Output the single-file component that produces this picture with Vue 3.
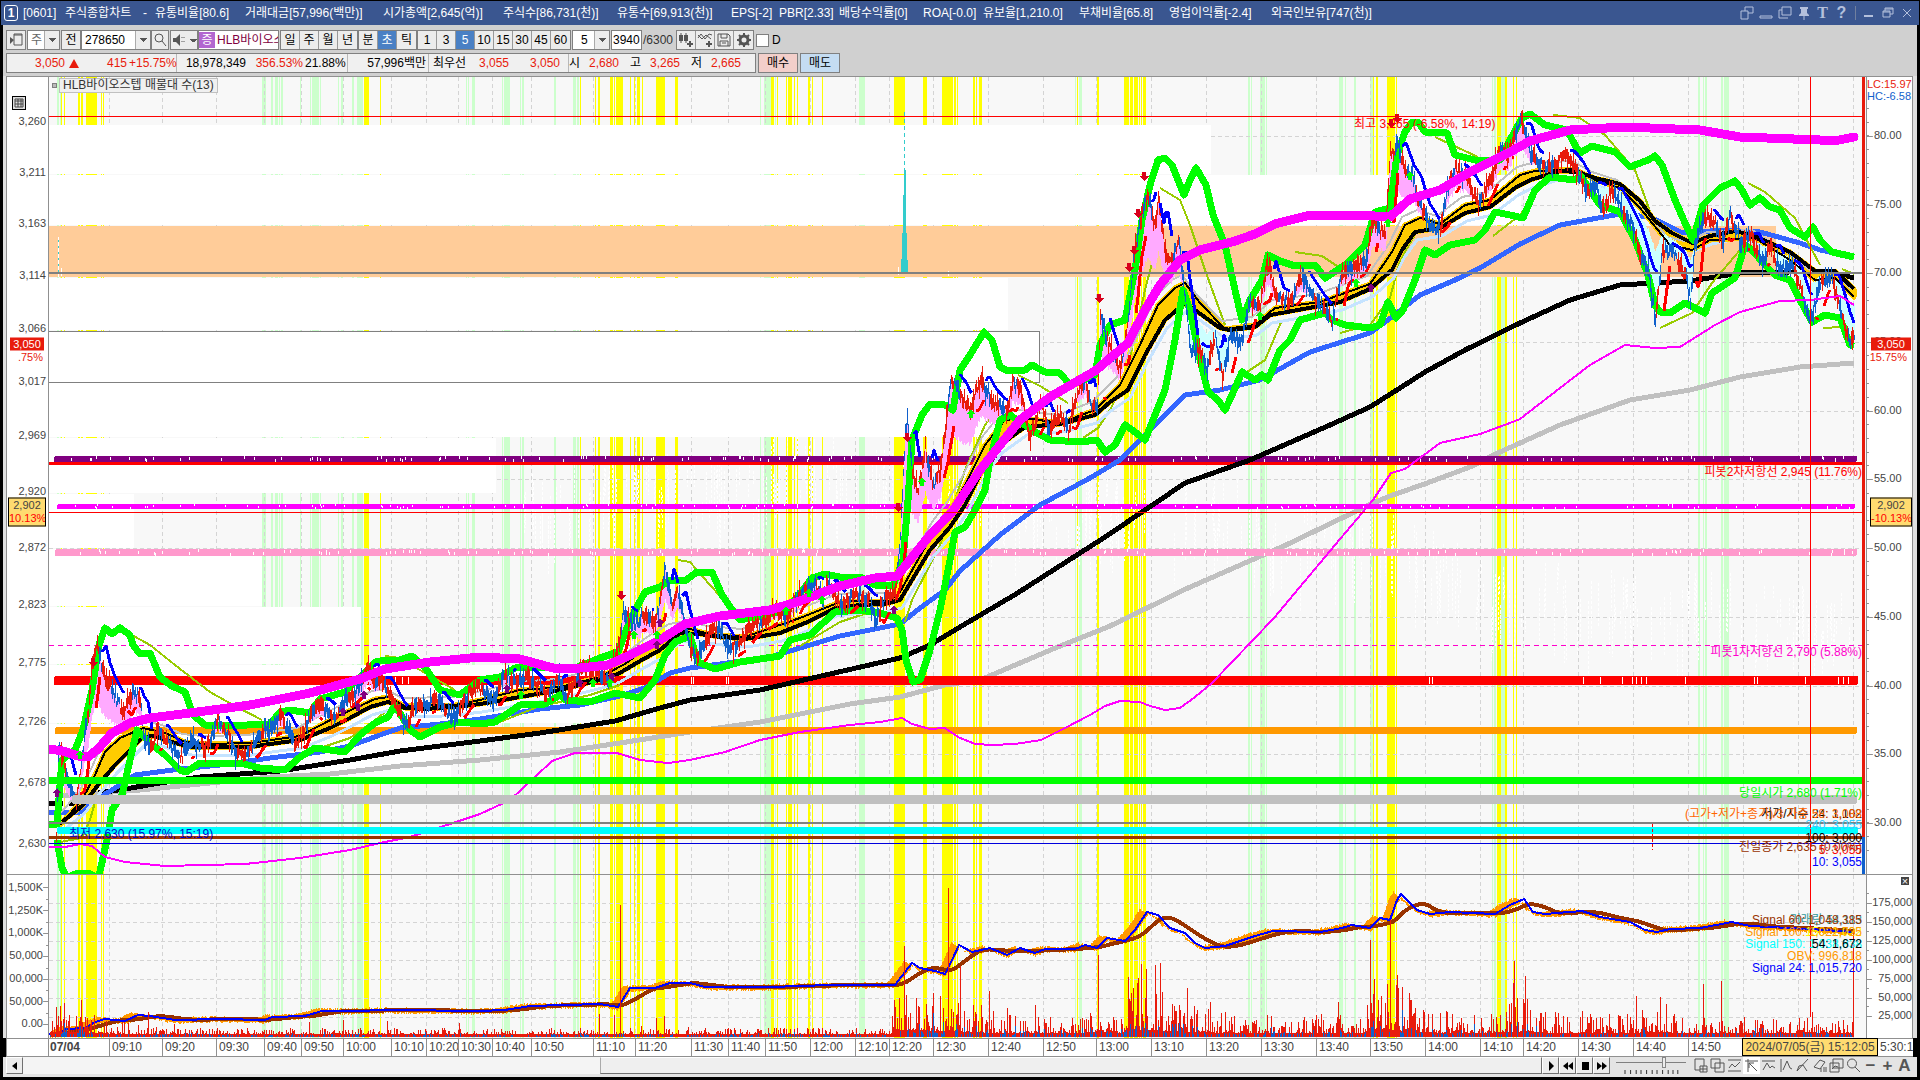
<script setup>
import { ref } from 'vue'

const VIEW = { x: 49, y: 77, w: 1817, h: 961 }
const topOf = (y) => ({ top: ((y - VIEW.y) / VIEW.h) * 100 + '%' })
const leftOf = (x) => ({ left: ((x - VIEW.x) / VIEW.w) * 100 + '%' })

/* each title entry takes six pixels per latin cell, twelve per hangul cell */
const cells = (t) => [...t].reduce((n, c) => n + (c.charCodeAt(0) > 0x2000 ? 2 : 1), 1)
const titleItems = [
  '[0601]', '주식종합차트', '-', '유통비율[80.6]', '거래대금[57,996(백만)]', '시가총액[2,645(억)]',
  '주식수[86,731(천)]', '유통수[69,913(천)]', 'EPS[-2]', 'PBR[2.33]', '배당수익률[0]', 'ROA[-0.0]',
  '유보율[1,210.0]', '부채비율[65.8]', '영업이익률[-2.4]', '외국인보유[747(천)]',
].map((text) => ({ text, width: cells(text) * 6 + 'px' }))

const code = ref('278650')
const count = ref('3940')
const periods = ['일', '주', '월', '년']
const units = ['분', '초', '틱']
const steps = ['1', '3', '5', '10', '15', '30', '45', '60']

/* seeded noise keeps the drawing stable between renders */
let seed = 7
const rnd = () => {
  seed = (seed * 1103515245 + 12345) % 2147483648
  return seed / 2147483648
}
const parse = (s) => s.trim().split(/\s+/).map((p) => p.split(',').map(Number))
const at = (pts, x) => {
  if (x <= pts[0][0]) return pts[0][1]
  for (let i = 1; i < pts.length; i++) {
    if (x <= pts[i][0]) {
      const [a, b] = [pts[i - 1], pts[i]]
      return a[1] + ((b[1] - a[1]) * (x - a[0])) / (b[0] - a[0] || 1)
    }
  }
  return pts[pts.length - 1][1]
}

const yellow = parse('61,1 64,1 78,2 81,2 86,11 101,1 103,1 364,5 380,1 580,1 595,1 598,2 610,3 614,1 616,7 630,1 634,1 637,3 642,1 656,9 675,3 771,3 777,1 786,1 788,4 794,1 797,1 808,2 812,1 822,1 894,11 923,4 942,11 954,2 957,1 973,2 976,1 979,3 1077,1 1097,2 1124,5 1130,3 1134,4 1139,1 1141,1 1143,3 1373,1 1376,2 1387,8 1396,1 1497,4 1505,2 1513,1 1516,1')
const mint = parse('57,2 60,1 262,4 271,2 275,3 279,1 281,2 300,1 310,1 312,7 320,1 338,1 341,2 352,2 357,6 466,1 468,1 472,3 502,1 504,6 520,1 522,2 554,2 573,3 577,2 760,1 764,7 775,1 859,6 1075,1 1079,3 1248,2 1251,1 1260,5 1266,1 1339,4 1345,1 1354,2 1370,3 1492,1 1494,2 1501,4 1698,2 1703,1 1705,2 1721,2 1724,5')
const times = [
  [109, '09:10'], [162, '09:20'], [216, '09:30'], [264, '09:40'], [301, '09:50'], [343, '10:00'], [391, '10:10'],
  [426, '10:20'], [458, '10:30'], [492, '10:40'], [531, '10:50'], [593, '11:10'], [635, '11:20'], [691, '11:30'],
  [728, '11:40'], [765, '11:50'], [810, '12:00'], [855, '12:10'], [889, '12:20'], [933, '12:30'], [988, '12:40'],
  [1043, '12:50'], [1096, '13:00'], [1151, '13:10'], [1206, '13:20'], [1261, '13:30'], [1316, '13:40'],
  [1370, '13:50'], [1425, '14:00'], [1480, '14:10'], [1523, '14:20'], [1578, '14:30'], [1633, '14:40'], [1688, '14:50'],
]
const gridX = [...times.map((t) => t[0]), 1743, 1798, 1853]
const gridY = [136, 205, 273, 342, 411, 479, 548, 617, 686, 754, 823, 903, 922, 941, 960, 979, 998, 1017]

/* volume-by-price rows: top, bottom, right edge */
const rows = [[125, 174, 1211], [175, 225, 1521], [278, 330, 1008], [331, 382, 1039], [383, 437, 1040], [438, 493, 496], [494, 548, 134], [549, 606, 262], [607, 664, 361], [665, 723, 603], [724, 780, 451]]

const magentaWide = '49,749 63,751 78,756 88,757 98,749 112,733 130,723 150,718 190,713 250,705 310,693 360,679 385,669 430,662 480,657 520,659 553,668 580,668 608,665 630,655 660,640 685,624 720,616 770,610 800,601 840,586 875,578 897,576 910,560 930,535 952,512 980,470 1020,420 1050,397 1095,371 1128,343 1145,310 1160,285 1180,260 1200,250 1235,241 1255,234 1275,224 1310,215 1360,215 1390,217 1410,199 1440,190 1470,172 1510,152 1530,141 1570,130 1625,127 1700,130 1740,137 1820,140 1834,141 1854,137'
const slowLine = '62,822 82,806 98,785 115,765 130,750 143,737 155,736 165,740 190,747 250,747 270,744 300,740 330,728 350,718 370,707 388,702 405,708 425,709 455,707 480,704 520,697 560,690 600,680 618,674 640,661 660,650 680,633 700,634 720,637 745,639 780,633 810,621 835,608 860,605 885,604 900,600 912,580 930,550 950,527 965,505 985,465 1000,445 1025,427 1060,424 1095,415 1110,402 1128,390 1145,355 1165,320 1185,303 1195,310 1220,328 1230,330 1255,327 1270,315 1320,306 1340,302 1370,289 1392,270 1402,250 1415,232 1440,228 1465,213 1490,207 1515,188 1530,180 1560,171 1578,172 1595,178 1620,184 1640,201 1655,221 1672,233 1692,243 1710,236 1735,231 1755,236 1790,252 1815,271 1835,271 1854,289'
const fastLine = '60,825 82,800 95,775 105,752 120,738 143,728 165,733 185,742 205,744 250,743 300,736 340,715 375,699 388,697 405,706 455,705 480,700 520,690 560,687 600,677 625,664 650,645 672,632 690,629 710,634 745,637 800,618 840,602 860,601 890,601 900,592 915,565 935,530 950,510 965,485 985,445 1005,420 1025,418 1060,423 1095,410 1120,385 1140,345 1158,305 1175,288 1185,283 1200,303 1225,329 1255,325 1275,308 1320,302 1370,284 1392,252 1405,225 1420,218 1440,224 1465,205 1490,200 1520,175 1535,171 1575,169 1595,180 1620,188 1640,208 1670,245 1692,250 1710,240 1755,238 1790,260 1815,280 1835,278 1854,297'
const blueLine = '49,812 80,812 95,800 112,790 135,775 180,769 220,765 270,758 320,752 350,746 380,735 400,728 440,724 480,719 540,709 580,705 620,696 645,688 670,673 690,668 720,664 770,657 800,648 840,636 870,630 900,624 920,608 945,590 960,571 1000,535 1040,505 1090,478 1120,460 1150,430 1185,395 1220,390 1260,380 1310,352 1370,333 1392,317 1420,295 1455,280 1480,268 1520,244 1560,225 1620,214 1650,217 1680,232 1700,232 1720,230 1760,232 1800,243 1820,250 1854,257'
const blackLine = '98,793 125,789 160,783 200,777 280,771 350,760 400,751 480,741 540,733 615,721 660,708 690,700 760,690 830,674 900,658 930,645 960,627 1016,594 1055,569 1102,539 1160,500 1185,483 1250,460 1330,425 1370,407 1400,388 1425,372 1465,350 1520,323 1570,300 1620,285 1690,281 1740,273 1790,272 1830,272 1854,278'
const grayLine = '60,796 140,790 270,777 330,774 400,766 480,760 560,752 620,743 690,732 760,722 850,704 900,697 945,685 980,680 1053,649 1108,627 1188,588 1286,545 1371,504 1390,496 1430,482 1470,467 1500,452 1560,425 1630,400 1690,390 1740,377 1800,367 1854,363'
const magentaThin = '49,847 65,847 80,844 92,846 105,857 125,862 165,866 245,864 300,858 350,850 380,843 410,837 450,824 480,814 510,800 535,777 552,761 575,753 617,753 640,760 668,763 690,760 725,752 760,740 800,732 850,725 880,722 902,718 912,724 930,729 945,728 958,737 975,744 992,745 1015,744 1041,740 1065,728 1090,715 1105,706 1120,701 1140,702 1150,706 1165,710 1180,708 1195,697 1212,683 1274,618 1335,545 1373,500 1391,473 1405,469 1440,443 1480,434 1510,423 1520,419 1560,388 1590,365 1625,345 1655,348 1680,347 1715,325 1740,312 1780,301 1810,300 1840,296 1854,305'
const greenTop = '49,824 57,824 62,760 75,750 83,730 92,690 99,645 105,628 112,634 120,628 130,635 133,645 140,654 150,653 160,677 172,686 185,692 193,715 205,725 225,726 270,724 280,712 290,710 310,713 320,699 345,692 375,662 385,660 400,660 412,656 425,667 440,690 460,695 480,680 500,677 515,668 540,667 575,668 600,658 618,652 630,620 645,592 660,587 670,580 685,581 697,572 712,572 722,595 733,611 740,620 780,612 795,600 812,578 825,574 840,577 860,577 875,585 893,586 903,560 908,500 912,440 922,415 930,404 945,405 953,410 960,370 970,355 984,332 992,340 1000,367 1008,371 1025,370 1032,365 1045,372 1060,373 1070,385 1080,382 1095,375 1100,345 1110,325 1125,320 1135,270 1142,220 1150,185 1158,160 1165,158 1172,165 1184,195 1190,180 1196,168 1206,185 1213,215 1225,245 1235,290 1242,320 1250,300 1262,280 1268,255 1280,261 1295,266 1315,265 1325,278 1345,265 1365,245 1375,212 1390,208 1397,155 1405,132 1412,122 1418,122 1425,132 1447,133 1455,155 1475,160 1500,160 1510,140 1522,118 1530,114 1545,125 1567,130 1575,145 1580,153 1592,146 1615,152 1630,167 1648,160 1655,156 1662,165 1675,200 1685,223 1693,240 1703,205 1720,188 1735,181 1742,190 1750,205 1760,198 1770,207 1780,210 1790,228 1805,237 1813,227 1820,240 1832,252 1854,257'
const greenLow = '57,840 62,868 68,880 98,880 107,840 112,810 122,795 130,760 137,730 150,743 165,755 180,770 186,772 200,763 240,763 260,768 285,770 300,757 315,748 345,752 360,735 375,723 388,717 395,705 410,730 420,737 440,727 460,722 480,724 495,722 520,705 545,704 560,695 565,700 590,702 615,693 640,698 655,680 665,655 675,642 690,636 698,662 715,669 740,662 780,656 790,640 810,635 835,612 860,610 880,613 897,618 902,630 906,660 913,682 920,680 930,650 940,610 950,560 955,532 965,527 975,510 985,490 990,460 1000,420 1010,415 1035,432 1050,440 1080,442 1097,440 1105,452 1115,445 1125,425 1135,432 1145,440 1155,415 1165,390 1175,340 1183,290 1190,310 1200,360 1208,392 1218,400 1225,410 1232,395 1242,372 1255,380 1262,375 1268,380 1280,350 1290,340 1300,320 1325,313 1332,320 1345,325 1370,328 1380,325 1388,302 1396,318 1403,310 1415,280 1425,250 1435,255 1450,245 1475,240 1485,230 1495,212 1510,215 1523,218 1535,190 1550,177 1575,180 1580,175 1600,205 1620,212 1635,240 1648,275 1655,305 1660,312 1670,313 1685,303 1705,313 1712,293 1735,278 1745,245 1752,250 1765,265 1775,275 1790,280 1800,300 1812,322 1825,315 1840,318 1850,345 1854,346'
const olive = [
  '60,842 82,838 90,820 97,795', '130,634 150,645 175,665 210,692 235,706 262,720', '320,748 350,738 375,720 388,710',
  '385,656 400,658 420,670 455,690', '500,722 540,706 560,702', '560,702 590,695 620,685', '678,560 690,562 710,585 730,607',
  '800,646 840,622 870,612', '905,622 912,600 940,545 965,470 985,425 1000,405', '1018,375 1040,386 1068,403',
  '1083,438 1098,428 1110,410 1125,380 1145,290 1158,240', '1160,188 1180,200 1190,225 1205,270 1225,325',
  '1235,380 1265,360 1282,320', '1295,252 1322,256 1340,268', '1340,333 1370,325 1390,298 1400,260 1415,235',
  '1435,137 1478,157', '1493,236 1520,215 1545,180', '1553,115 1580,118 1605,135 1635,170 1655,225',
  '1660,328 1692,313 1712,283 1740,250', '1748,183 1765,192 1795,218 1820,265', '1823,328 1842,327', '1842,269 1854,274',
]

const price = parse('49,835 56,835 58,745 63,760 70,790 76,800 80,770 88,710 92,660 97,645 101,665 106,680 115,698 123,712 127,700 133,690 140,700 143,735 150,750 158,728 166,740 180,760 190,740 205,750 212,735 218,720 228,735 235,755 250,752 262,730 275,728 280,715 290,735 297,745 305,725 318,703 328,712 336,718 345,698 358,690 368,665 375,685 382,680 392,700 407,725 415,702 425,706 435,697 452,718 468,695 477,685 492,702 505,675 515,685 525,675 535,685 545,695 558,678 565,697 580,670 595,668 608,680 617,650 623,612 635,625 645,615 655,625 660,600 665,570 672,605 677,590 684,620 690,650 696,658 705,640 718,625 728,650 738,645 750,628 765,620 775,610 787,618 795,600 805,590 812,582 822,595 828,583 842,608 855,592 868,598 875,620 885,598 895,590 900,540 905,430 907,424 912,470 918,490 925,450 933,485 940,470 945,430 950,378 957,385 963,400 970,410 980,378 985,390 995,405 1008,410 1012,380 1020,390 1030,440 1040,400 1048,430 1060,415 1068,430 1078,390 1085,380 1090,405 1097,410 1100,315 1108,345 1115,360 1120,370 1128,320 1133,260 1140,220 1147,195 1155,225 1158,200 1165,255 1172,260 1178,240 1185,300 1190,350 1200,350 1207,370 1215,335 1222,380 1230,335 1240,345 1250,300 1260,305 1267,260 1275,295 1290,302 1300,275 1315,300 1325,310 1332,325 1340,275 1352,270 1365,262 1372,220 1385,235 1390,155 1397,145 1405,170 1412,175 1420,205 1430,225 1440,230 1447,190 1455,170 1468,180 1478,205 1490,180 1500,150 1508,155 1517,128 1522,122 1530,155 1540,165 1555,165 1562,155 1575,165 1585,190 1595,185 1603,210 1612,190 1625,215 1632,225 1640,255 1648,270 1655,320 1662,250 1675,255 1685,275 1690,300 1695,240 1705,215 1715,225 1722,240 1730,215 1740,245 1750,235 1762,265 1770,245 1778,270 1792,265 1800,290 1810,322 1820,285 1830,275 1838,300 1845,330 1850,340 1854,335')
const slowPts = parse(slowLine)
let redBars = ''
let blueBars = ''
let pinkFill = ''
let cyanFill = ''
const capBlue = []
const capRed = []
let tone = 0
for (let x = 56; x <= 1854; x += 1) {
  const p = at(price, x) + (rnd() - 0.5) * 8
  if (x % 3 === 0) tone = rnd() + (at(price, x + 3) > at(price, x - 3) ? 0.08 : -0.08)
  const reach = x % 3 === 1 ? 12 : 7
  const up = 2 + rnd() * reach
  const dn = 2 + rnd() * reach
  const bar = `M${x}.5 ${Math.round(p - up)}V${Math.round(p + dn)}`
  if (tone < 0.52) redBars += bar
  else blueBars += bar
  const s = at(slowPts, x)
  if (s - p > 22) pinkFill += `M${x}.5 ${Math.round(p)}V${Math.round(p + (s - p) * 0.4)}`
  if (p - s > 16) cyanFill += `M${x}.5 ${Math.round(p)}V${Math.round(s + (p - s) * 0.3)}`
  if (x % 2 === 0) {
    const before = at(price, x - 9)
    const now = at(price, x)
    if (now - before > 3) capBlue.push([x, Math.round(before + (now - before) * 0.25 - 8)])
    if (before - now > 3) capRed.push([x, Math.round(before - (before - now) * 0.25 + 8)])
  }
}
const runs = (pts) => pts.map((p, i) => {
  const q = pts[i - 1]
  return (q && p[0] - q[0] <= 2 && Math.abs(p[1] - q[1]) < 26 ? 'L' : 'M') + p[0] + ' ' + p[1]
}).join('')
const capBluePath = runs(capBlue)
const capRedPath = runs(capRed.filter((p) => p[0] % 16 < 12))
const ribbon = 'M' + fastLine + 'L' + slowPts.slice().reverse().map((p) => p.join(',')).join(' ') + 'Z'

/* faint white ticks and the notches they cut into the level bars */
let flecks = ''
let notches = ''
for (let i = 0; i < 420; i++) {
  const x = Math.round(500 + rnd() * 1350)
  const y = Math.round(at(slowPts, 2400 - x) * 0.3 + 380 + rnd() * 60)
  flecks += `M${x}.5 ${y}v${Math.round(12 + rnd() * 50)}`
}
for (let i = 0; i < 150; i++) {
  const x = Math.round(60 + rnd() * 1785)
  const cx = x + Math.round(rnd() * 6)
  notches += `M${x}.5 ${456 + Math.round(rnd() * 3)}v3M${cx}.5 ${504 + Math.round(rnd() * 3)}v2M${x + 9}.5 ${549 + Math.round(rnd() * 4)}v3`
}
for (const x of [691, 693, 726, 728, 395, 402, 408, 1429, 1432, 1583, 1600, 1622, 1632, 1636, 1641, 1646, 1685, 1754, 1757, 1805, 1838, 1843, 1848]) notches += `M${x}.5 677v7`

const levels = [
  { y: 456, h: 6, x: 54, e: 1857, c: '#800080' }, { y: 462, h: 3, x: 49, e: 1862, c: '#ff0000' },
  { y: 504, h: 5, x: 57, e: 1855, c: '#ff00ff' }, { y: 549, h: 7, x: 55, e: 1857, c: '#ff99cc' },
  { y: 676, h: 9, x: 54, e: 1858, c: '#ff0000' }, { y: 727, h: 7, x: 55, e: 1857, c: '#ff9900' },
]
const baseLevels = [
  { y: 777, h: 7, x: 49, e: 1862, c: '#00ff00' }, { y: 795, h: 9, x: 72, e: 1857, c: '#c0c0c0' },
  { y: 822, h: 2, x: 49, e: 1862, c: '#808080' }, { y: 827, h: 7, x: 57, e: 1858, c: '#00ffff' },
  { y: 836, h: 3, x: 49, e: 1862, c: '#993300' }, { y: 843, h: 1, x: 49, e: 1862, c: '#0000dd' },
]

const down = parse('93,662 621,595 898,507 907,437 1099,298 1129,267 1134,250 1138,213 1144,176 1391,123 1397,118')
const upPurple = parse('57,793 343,712 358,707 364,695 507,689 580,683 612,677 660,623 657,645 894,610 1371,288')
const upGreen = parse('80,755 521,695 593,683 610,683 634,635 657,635 786,611 809,593 822,600 922,482 971,414 1260,316 1356,283 1388,223 1410,176')

/* lower panel */
const obv = parse('49,1034 58,1034 65,1029 85,1028 95,1022 105,1019 125,1021 138,1015 150,1016 175,1020 220,1019 265,1020 272,1017 305,1016 322,1011 350,1011 390,1010 480,1011 505,1010 530,1006 600,1004 618,1007 630,988 655,988 670,983 690,983 705,987 770,987 830,985 895,985 905,972 912,963 920,968 935,971 945,974 952,960 959,945 972,952 990,948 1007,955 1020,948 1035,953 1045,949 1075,949 1085,945 1097,948 1107,938 1125,941 1135,930 1147,912 1158,915 1170,928 1185,933 1195,943 1205,948 1225,946 1240,941 1255,936 1273,931 1320,932 1342,928 1352,925 1370,928 1380,918 1390,920 1397,900 1401,894 1412,905 1417,910 1430,914 1450,912 1495,914 1510,905 1524,899 1533,912 1545,914 1582,911 1600,917 1630,922 1645,930 1657,932 1670,929 1700,928 1732,922 1750,926 1810,929 1854,932')
let orangeBars = ''
const brown = []
for (let x = 50; x <= 1854; x++) {
  const now = at(obv, x)
  const lead = at(obv, x + 8)
  const lift = now - lead
  orangeBars += `M${x}.5 ${Math.round(now + 2 + rnd() * 2)}V${Math.round(now - 1 - lift - rnd() * 2)}`
  if (x % 6 === 0) {
    let sum = 0
    for (let k = 0; k < 30; k++) sum += at(obv, x - k)
    brown.push(x + ',' + (sum / 30).toFixed(1))
  }
}
const brownLine = brown.join(' ')
const obvLine = obv.map((p) => p.join(',')).join(' ')
const energy = parse('49,5 57,20 110,9 160,4 600,4 640,5 890,4 896,35 960,22 1000,13 1080,10 1097,22 1120,12 1128,38 1160,30 1200,18 1260,12 1360,12 1372,38 1410,26 1440,14 1500,13 1525,26 1550,13 1625,12 1660,20 1690,10 1840,11 1854,16')
let volRed = ''
let volBlue = ''
for (let x = 50; x <= 1853; x++) {
  const e = at(energy, x)
  const h = 1 + Math.pow(rnd(), 3) * e * 1.6 + e * 0.15
  volRed += `M${x}.5 1037v${-Math.round(h + 1)}`
  if (rnd() < 0.35) volBlue += `M${x}.5 1037v${-Math.round(1 + h * 0.5 * rnd() + e * 0.08)}`
}
const spikes = parse('56,1007 81,1000 94,1015 148,1012 174,1024 309,1022 343,1020 387,1021 459,1023 599,1014 614,1015 620,905 656,1018 664,1016 895,1007 899,998 904,946 906,995 918,1006 926,1012 948,888 960,966 989,991 1007,1008 1035,1005 1098,955 1128,995 1138,978 1141,964 1146,969 1155,965 1160,963 1187,988 1210,1002 1221,1013 1316,1016 1338,1002 1370,940 1374,979 1387,984 1390,920 1397,975 1410,1000 1424,1014 1509,1004 1513,983 1514,961 1524,1003 1525,976 1555,1012 1582,1011 1636,996 1660,997 1703,984 1721,981 1812,1012 1853,930')
const spikePath = spikes.map(([x, y]) => `M${x}.5 1037V${y}`).join('')

const leftLabels = [
  [121, '3,260'], [172, '3,211'], [223, '3,163'], [275, '3,114'], [328, '3,066'], [381, '3,017'], [435, '2,969'],
  [491, '2,920'], [547, '2,872'], [604, '2,823'], [662, '2,775'], [721, '2,726'], [782, '2,678'], [843, '2,630'],
  [887, '1,500K'], [910, '1,250K'], [932, '1,000K'], [955, '50,000'], [978, '00,000'], [1001, '50,000'], [1023, '0.00'],
]
const rightLabels = [
  [135, '80.00'], [204, '75.00'], [272, '70.00'], [341, '65.00'], [410, '60.00'], [478, '55.00'], [547, '50.00'],
  [616, '45.00'], [685, '40.00'], [753, '35.00'], [822, '30.00'],
]
const volLabels = [[902, '175,000'], [921, '150,000'], [940, '125,000'], [959, '100,000'], [978, '75,000'], [997, '50,000'], [1015, '25,000']]
const minor = []
for (let i = 0; i < 55; i++) minor.push(Math.round(108 + i * 13.74))
const notes = [
  { y: 472, t: '피봇2차저항선 2,945 (11.76%)', c: '#ff0000' },
  { y: 652, t: '피봇1차저항선 2,790 (5.88%)', c: '#ff00cc' },
  { y: 793, t: '당일시가 2,680 (1.71%)', c: '#00ff00' },
  { y: 814, t: '저가/지수 24: 1,102', c: '#000000' },
  { y: 814, t: '(고가+저가+종가)/3 가중 58: 3,088', c: '#ff6600' },
  { y: 825, t: '240: 3,055', c: '#33ccff' },
  { y: 838, t: '100: 3,000', c: '#000000' },
  { y: 850, t: '5: 3,055', c: '#ff0000' },
  { y: 847, t: '전일종가 2,635 (0.00%)', c: '#993300' },
  { y: 862, t: '10: 3,055', c: '#0000ff' },
  { y: 920, t: '거래량 54,113', c: '#339999' },
  { y: 920, t: 'Signal 60: 1,048,385', c: '#993300' },
  { y: 932, t: '150: 1,022', c: '#ffff00' },
  { y: 932, t: 'Signal 100: 1,022,735', c: '#ff9900' },
  { y: 944, t: 'Signal 150: 1,038,838', c: '#00ffff' },
  { y: 944, t: '54: 1,672', c: '#000000' },
  { y: 956, t: 'OBV: 996,818', c: '#ff9900' },
  { y: 968, t: 'Signal 24: 1,015,720', c: '#0000ff' },
]
const tools = [
  'M2 1h9v7M2 1v11h5M7 8h7v6H7zM10 8v6M7 11h7', 'M1 1h9v9H1zM5 5h9v9H5z', 'M1 2h13M1 13h13M2 10l3-4 3 3 5-5', 'M1 3h13M4 1v13M5 5l8 8M5 5h5M5 5v5',
  'M1 3h13M2 12l4-7 3 5 2-2 3 2', 'M3 1v13M5 12l4-9 3 7 2 1', 'M2 13L13 1M2 13l2-5 4-1 4 6', 'M2 9l6-7 5 2-5 7zM9 10v4M12 9v5M14 9v5',
  'M4 1h10v9H4zM1 5h9v9H1zM3 11l3-3 3 1', 'M6 1a4 4 0 1 0 0 9a4 4 0 1 0 0-9M9 9l5 5',
]
</script>

<template>
  <div class="window">
    <header class="title">
      <span class="badge">1</span>
      <h1><span v-for="t in titleItems" :key="t.text" :style="{ width: t.width }">{{ t.text }}</span></h1>
      <div class="win-icons">
        <button aria-label="분리"><svg viewBox="0 0 14 14"><path d="M5 1h8v6M5 1v4M1 5h7v8H1zM8 7h5" /></svg></button>
        <button aria-label="접기"><svg viewBox="0 0 14 14"><path d="M1 10h12v2H1z" /></svg></button>
        <button aria-label="복사"><svg viewBox="0 0 14 14"><path d="M4 1h9v8H4zM1 4v8h9M1 4h3" /></svg></button>
        <button aria-label="고정"><svg viewBox="0 0 14 14"><path class="solid" d="M3 1h8v2h-1v4l2 2v1H2V9l2-2V3H3z" /><path d="M7 10v4" /></svg></button>
        <button class="glyph">T</button>
        <button class="glyph q">?</button>
        <i></i>
        <button aria-label="최소화"><svg viewBox="0 0 14 14"><path class="solid" d="M2 9h9v2H2z" /></svg></button>
        <button aria-label="이전 크기"><svg viewBox="0 0 14 14"><path d="M4 2h8v6H9M4 3h8M4 2v3M2 5h7v6H2zM2 6h7" /></svg></button>
        <button aria-label="닫기"><svg viewBox="0 0 14 14"><path d="M3 3l8 8M11 3l-8 8" /></svg></button>
      </div>
    </header>

    <div class="bars">
      <div class="bar">
        <button class="sq" aria-label="메뉴"><svg viewBox="0 0 16 16"><path d="M6 2h8v11H6zM6 3h8" /><path class="fill" d="M2 5l4 3-4 4z" /></svg></button>
        <label class="pick narrow"><select aria-label="종류"><option>주</option></select></label>
        <button class="sq">전</button>
        <label class="pick codebox"><input v-model="code" aria-label="종목코드"></label>
        <button class="sq find" aria-label="찾기"><svg viewBox="0 0 16 16"><circle cx="7" cy="6" r="4" /><path d="M10 9l4 5" /></svg></button>
        <button class="sq sound" aria-label="소리"><svg viewBox="0 0 16 16"><path class="fill" d="M2 6h3l4-4v12l-4-4H2z" /><path d="M11 5v1M11 9v1M13 5v1M13 9v1" /></svg></button>
        <div class="stock"><em>증</em><span>HLB바이오스텝</span></div>
        <div class="group"><button v-for="p in periods" :key="p">{{ p }}</button></div>
        <div class="group"><button v-for="u in units" :key="u" :class="{ on: u === '초' }">{{ u }}</button></div>
        <div class="group"><button v-for="s in steps" :key="s" :class="{ on: s === '5' }">{{ s }}</button></div>
        <label class="pick five"><select aria-label="간격"><option>5</option></select></label>
        <input v-model="count" class="count" aria-label="개수"><span class="total">/6300</span>
        <div class="group icons">
          <button aria-label="차트 추가"><svg viewBox="0 0 16 16"><path d="M3 1v10M8 1v10" /><path class="fill" d="M1 3h4v6H1zM6 3h4v6H6z" /><path class="thick" d="M12 9v6M9 12h6" /></svg></button>
          <button aria-label="지표 추가"><svg viewBox="0 0 16 16"><path d="M1 6l3-4 4 5 4-5 3 1M1 3l4 4 4-4 5 4" /><path class="thick" d="M12 9v6M9 12h6" /></svg></button>
          <button aria-label="저장"><svg viewBox="0 0 16 16"><path d="M2 2h10l2 2v10H2zM5 2v4h6V2M4 14V9h8v5M6 11h4" /></svg></button>
          <button aria-label="설정"><svg viewBox="0 0 16 16"><circle cx="8" cy="8" r="4" class="gear" /><path class="thick" d="M8 1v3M8 12v3M1 8h3M12 8h3M3 3l2 2M11 11l2 2M13 3l-2 2M3 13l2-2" /></svg></button>
        </div>
        <label class="check"><input type="checkbox">D</label>
      </div>
      <div class="bar">
        <div class="quote">
          <span class="r w60">3,050</span><i class="tri"></i><span class="r w49">415</span><span class="r w48 sep">+15.75%</span>
          <span class="w71">18,978,349</span><span class="r w57">356.53%</span><span class="w43 sep">21.88%</span>
          <span class="w81 sep">57,996백만</span><span class="w39">최우선</span><span class="r w43">3,055</span><span class="r w58 pad sep">3,050</span>
          <span class="w13">시</span><span class="r w39">2,680</span><span class="w22">고</span><span class="r w39">3,265</span><span class="w22">저</span><span class="r w39">2,665</span>
        </div>
        <button class="trade buy">매수</button>
        <button class="trade sell">매도</button>
      </div>
    </div>

    <main class="chart">
      <div class="axis left">
        <svg class="ticks" viewBox="0 77 42 961" preserveAspectRatio="none"><path d="M0 874.5H42M37 887.5h5M37 910.5h5M37 933.5h5M37 956.5h5M37 979.5h5M37 1001.5h5M37 1024.5h5M40 899.5h2M40 922.5h2M40 945.5h2M40 968.5h2M40 990.5h2M40 1013.5h2" /></svg>
        <button class="gridbtn" :style="topOf(103)" aria-label="표"><svg viewBox="0 0 12 12"><path d="M2 2h8v8H2zM2 4h8M2 7h8M5 2v8M8 2v8" /></svg></button>
        <span v-for="l in leftLabels" :key="l[0]" :style="topOf(l[0])" :class="{ low: l[0] > 874 }">{{ l[1] }}</span>
        <strong class="now" :style="topOf(344)">3,050</strong>
        <span class="rate" :style="topOf(357)">.75%</span>
        <div class="cursor" :style="topOf(512)">2,902<em>10.13%</em></div>
      </div>

      <div class="plot">
        <svg class="canvas" viewBox="49 77 1817 961" preserveAspectRatio="none">
          <defs><clipPath id="price"><rect x="49" y="77" width="1813" height="797" /></clipPath></defs>
          <rect x="49" y="77" width="1817" height="961" fill="#f8f8f8" />
          <rect v-for="b in mint" :key="'m' + b[0]" :x="b[0]" y="77" :width="b[1]" height="961" fill="#ccffcc" />
          <rect v-for="b in yellow" :key="'y' + b[0]" :x="b[0]" y="77" :width="b[1]" height="961" fill="#ffff00" />
          <g stroke="#d4d4d4" stroke-dasharray="4 3">
            <path v-for="x in gridX" :key="x" :d="`M${x + 0.5} 77V1038`" />
            <path v-for="y in gridY" :key="y" :d="`M49 ${y + 0.5}H1862`" />
          </g>
          <rect v-for="r in rows" :key="r[0]" x="49" :y="r[0]" :width="r[2] - 49" :height="r[1] - r[0]" fill="#fff" />
          <rect x="49" y="226" width="1727" height="51" fill="#ffcc99" />
          <path d="M49 331.5H1039.500V382.500H49" fill="none" stroke="#808080" />
          <path :d="flecks" class="fleck" />
          <g clip-path="url(#price)" fill="none" stroke-linejoin="round">
            <polyline :points="grayLine" stroke="#c0c0c0" stroke-width="5" />
            <rect v-for="l in levels" :key="l.y" :x="l.x" :y="l.y" :width="l.e - l.x" :height="l.h" :fill="l.c" :rx="l.x > 49 ? 2 : 0" />
            <path :d="notches" stroke="#fff" />
            <path d="M49 645.5H1862" stroke="#ff00cc" stroke-dasharray="5 4" />
            <path d="M49 803h14m6 0h8" stroke="#000" stroke-width="5" />
            <polyline :points="blackLine" stroke="#000" stroke-width="5" />
            <polyline :points="blueLine" stroke="#3366ff" stroke-width="5" />
            <polyline v-for="(o, i) in olive" :key="i" :points="o" stroke="#99cc00" stroke-width="2" />
            <polyline :points="slowLine" stroke="#c5e3ff" stroke-width="3" transform="translate(2 8)" />
            <path :d="ribbon" fill="#ffcc00" stroke="#ffcc00" stroke-width="5" />
            <polyline :points="fastLine" stroke="#c0c0c0" stroke-width="2" transform="translate(-3 -8)" />
            <path :d="pinkFill" stroke="#ffaaff" />
            <path :d="cyanFill" stroke="#ccffff" />
            <polyline :points="fastLine" stroke="#000" stroke-width="2" />
            <polyline :points="slowLine" stroke="#000" stroke-width="4" />
            <polyline :points="greenLow" stroke="#00ff00" stroke-width="7" />
            <polyline :points="greenTop" stroke="#00ff00" stroke-width="7" />
            <path d="M66 874l10-4h14l8 4" fill="#00ff00" stroke="none" />
            <path :d="capRedPath" stroke="#ff0000" stroke-width="3" />
            <path :d="redBars" stroke="#e81b0c" />
            <path :d="blueBars" stroke="#1060cc" />
            <path :d="capBluePath" stroke="#0000ff" stroke-width="3" />
            <polyline :points="magentaWide" stroke="#ff00ff" stroke-width="9" stroke-linecap="round" />
            <polyline :points="magentaThin" stroke="#ff00ff" stroke-width="2" />
            <rect v-for="l in baseLevels" :key="l.y" :x="l.x" :y="l.y" :width="l.e - l.x" :height="l.h" :fill="l.c" :rx="l.h > 6 && l.x > 49 ? 3 : 0" />
            <path d="M904.500 112V170" stroke="#33cccc" stroke-dasharray="4 3" />
            <path d="M904 170h2v50l2 53h-7l2-53z" fill="#33cccc" />
            <path d="M58.500 237v40M61.500 268v8M898.500 267v8M948.500 271v5" stroke="#fff" />
            <path d="M58.500 240v32" stroke="#33cccc" stroke-dasharray="2 4" />
            <path d="M49 273H1862" stroke="#808080" stroke-width="2" />
            <path v-for="a in down" :key="'d' + a" :d="`M${a[0] - 2} ${a[1] - 4}h4v4h3l-5 5-5-5h3z`" fill="#d8001c" />
            <path v-for="a in upPurple" :key="'p' + a" :d="`M${a[0] - 2} ${a[1] + 4}h4v-4h2l-4-5-4 5h2z`" fill="#800080" />
            <path v-for="a in upGreen" :key="'g' + a" :d="`M${a[0] - 2} ${a[1] + 4}h4v-4h2l-4-5-4 5h2z`" fill="#00ff00" />
            <path d="M1652.500 824v26" stroke="#ff0000" stroke-dasharray="3 2" />
            <path d="M49 116.500H1862M49 512.500H1862" stroke="#ff0000" />
          </g>
          <g fill="none">
            <path :d="orangeBars" stroke="#ff9900" />
            <polyline :points="brownLine" stroke="#993300" stroke-width="4" />
            <polyline :points="obvLine" stroke="#0000ff" stroke-width="2" />
            <path :d="volRed" stroke="#e81b0c" />
            <path :d="volBlue" stroke="#1060cc" />
            <path :d="spikePath" stroke="#e81b0c" />
            <path d="M1810.500 77V1017" stroke="#ff0000" />
            <path d="M49 874.500H1866" stroke="#909090" />
          </g>
          <rect x="1862" y="77" width="3" height="760" fill="#e81b0c" />
          <rect x="1862" y="837" width="3" height="37" fill="#1060cc" />
        </svg>
        <div class="caption"><i></i><span>HLB바이오스텝 매물대 수(13)</span></div>
        <span class="note" :style="{ ...topOf(124), ...leftOf(1354), color: '#ff0000' }">최고 3,265 (-6.58%, 14:19)</span>
        <span class="note" :style="{ ...topOf(834), ...leftOf(69), color: '#0000cc' }">최저 2,630 (15.97%, 15:19)</span>
        <span v-for="n in notes" :key="n.t" class="note end" :style="{ ...topOf(n.y), color: n.c }">{{ n.t }}</span>
      </div>

      <div class="axis right">
        <svg class="ticks" viewBox="0 77 46 961" preserveAspectRatio="none">
          <path v-for="m in minor" :key="m" :d="`M0 ${m + 0.5}h2`" />
          <path v-for="l in rightLabels" :key="l[0]" :d="`M0 ${l[0] + 1.5}h6`" />
          <path v-for="l in volLabels" :key="l[0]" :d="`M0 ${l[0] + 1.5}h5M0 ${l[0] - 8.5}h2`" />
          <path d="M0 874.500H46" />
        </svg>
        <span class="from lc" :style="topOf(84)">LC:15.97</span>
        <span class="from hc" :style="topOf(96)">HC:-6.58</span>
        <span v-for="l in rightLabels" :key="l[0]" class="mid" :style="topOf(l[0])">{{ l[1] }}</span>
        <strong class="now" :style="topOf(344)">3,050</strong>
        <span class="rate" :style="topOf(357)">15.75%</span>
        <div class="cursor" :style="topOf(512)">2,902<em>-10.13%</em></div>
        <button class="shut" :style="topOf(881)" aria-label="지표 닫기">×</button>
        <span v-for="l in volLabels" :key="l[0]" class="vol" :style="topOf(l[0])">{{ l[1] }}</span>
      </div>
    </main>

    <div class="timeline">
      <div class="scale">
        <b>07/04</b>
        <span v-for="t in times" :key="t[1]" :style="leftOf(t[0])">{{ t[1] }}</span>
        <mark>2024/07/05(금) 15:12:05</mark>
      </div>
      <span class="last">5:30:1</span>
    </div>

    <footer class="foot">
      <button class="key" aria-label="왼쪽"><svg viewBox="0 0 14 14"><path d="M9 3v8L4 7z" /></svg></button>
      <div class="track"><div class="thumb"></div></div>
      <button class="key" aria-label="재생"><svg viewBox="0 0 14 14"><path d="M5 2v10l5-5z" /></svg></button>
      <button class="key" aria-label="뒤로"><svg viewBox="0 0 14 14"><path d="M7 3v8L2 7zM12 3v8L7 7z" /></svg></button>
      <button class="key" aria-label="정지"><svg viewBox="0 0 14 14"><path d="M4 3h7v8H4z" /></svg></button>
      <button class="key" aria-label="앞으로"><svg viewBox="0 0 14 14"><path d="M2 3v8l5-4zM7 3v8l5-4z" /></svg></button>
      <div class="speed"><input type="range" min="0" max="10" value="7" aria-label="속도"><svg viewBox="0 0 70 5"><path d="M2.500 0v5M9.500 0v5M16.500 0v5M22.500 0v5M29.500 0v5M36.500 0v5M42.500 0v5M49.500 0v5M56.500 0v5M62.500 0v5M68.500 0v5" /></svg></div>
      <div class="tools">
        <button v-for="(d, i) in tools" :key="i" :class="{ lit: i === 3 }" :aria-label="'도구 ' + (i + 1)"><svg viewBox="0 0 15 15"><path :d="d" /></svg></button>
        <button>−</button><button>+</button><button>A</button>
      </div>
    </footer>
  </div>
</template>

<style>
body { margin: 0; background: #000; }
</style>

<style scoped>
* { box-sizing: border-box; }
.window {
  display: flex; flex-direction: column; min-height: 100vh; padding: 1px 0 3px; background: #000; color: #000;
  font: 12px/14px "Liberation Sans", "Noto Sans CJK KR", sans-serif; overflow: hidden;
}
button, input, select { font: inherit; color: inherit; margin: 0; padding: 0; border: 0; border-radius: 0; background: none; }
button { display: flex; align-items: center; justify-content: center; }
svg { display: block; fill: none; stroke: currentColor; }

.title { display: flex; align-items: center; height: 24px; margin: 0 1px; padding: 0 3px; background: #3a5690; color: #fff; }
.badge { width: 14px; height: 16px; margin-right: 5px; border: 1px solid #fff; border-radius: 3px; font-weight: bold; text-align: center; }
h1 { display: flex; flex: 1; margin: 0; font: inherit; white-space: nowrap; }
h1 span { flex: none; }
.win-icons { display: flex; align-items: center; color: #b4c0dc; }
.win-icons button { width: 19px; height: 18px; }
.win-icons svg { width: 14px; height: 14px; }
.win-icons .solid { fill: currentColor; stroke: none; }
.win-icons i { width: 1px; height: 14px; margin: 0 3px 0 4px; background: #71809f; }
.win-icons .glyph { font: bold 16px/16px "Liberation Serif", serif; }
.win-icons .q { font-family: "Liberation Sans", sans-serif; }

.bars { display: flex; flex-direction: column; gap: 3px; height: 51px; margin: 0 3px; padding: 5px 3px 3px; background: #d0d0d0; white-space: nowrap; }
.bar { display: flex; height: 20px; }
.bar > * { flex: none; }
.sq, .pick, .group, .stock, .count, .quote, .trade { height: 20px; border: 1px solid #808080; background: #ececec; }
.sq { width: 20px; }
.sq svg, .icons svg { width: 16px; height: 16px; color: #555; }
.fill { fill: currentColor; stroke: none; }
.thick { stroke-width: 2; }
.gear { stroke-width: 3; }
.pick { position: relative; display: flex; background: #fff; }
.pick select { width: 100%; padding-left: 3px; appearance: none; }
.pick::after {
  content: ""; position: absolute; top: 0; right: 0; bottom: 0; width: 14px; border-left: 1px solid #aaa;
  background: linear-gradient(#555, #555) center 7px / 7px 1px no-repeat, linear-gradient(#555, #555) center 8px / 5px 1px no-repeat, linear-gradient(#555, #555) center 9px / 3px 1px no-repeat, linear-gradient(#555, #555) center 10px / 1px 1px no-repeat, #ececec;
}
.narrow { width: 33px; margin: 0 1px; color: #666; }
.codebox { width: 70px; }
.codebox input { width: 52px; padding-left: 3px; }
.find { width: 18px; }
.sound { width: 28px; margin-left: 1px; background: linear-gradient(#555, #555) 19px 8px / 7px 1px no-repeat, linear-gradient(#555, #555) 20px 9px / 5px 1px no-repeat, linear-gradient(#555, #555) 21px 10px / 3px 1px no-repeat, #ececec; justify-content: flex-start; }
.stock { display: flex; align-items: center; width: 81px; margin: 0 1px 0 0; background: #fff; color: #800040; overflow: hidden; }
.stock em { width: 16px; flex: none; margin-right: 2px; background: #b266d0; color: #fff; font-style: normal; line-height: 16px; text-align: center; }
.group { display: flex; }
.group button { width: 19px; border-right: 1px solid #999; }
.group button:last-child { border-right: 0; }
.group .on { background: #4a80c4; color: #fff; }
.five { width: 38px; margin-left: 1px; }
.five select { padding-left: 8px; }
.count { width: 31px; margin-left: 1px; padding-left: 1px; background: #fff; }
.total { width: 34px; padding: 3px 0 0 1px; color: #333; }
.icons { margin-right: 2px; }
.check { display: flex; align-items: center; gap: 3px; }
.check input { appearance: none; width: 13px; height: 13px; border: 1px solid #808080; background: #fff; }

.quote { display: flex; align-items: center; width: 750px; margin-right: 2px; background: #f0f0f0; }
.quote span { flex: none; height: 18px; line-height: 18px; padding-right: 2px; text-align: right; }
.quote .r { color: #e81b0c; }
.quote .sep { border-right: 1px solid #b8b8b8; }
.quote .pad { padding-right: 8px; }
.tri { width: 0; margin: 0 1px 0 2px; border: 5px solid transparent; border-top: 0; border-bottom: 9px solid #e81b0c; }
.w60 { width: 60px; } .w49 { width: 49px; } .w48 { width: 48px; } .w71 { width: 71px; } .w57 { width: 57px; } .w43 { width: 43px; }
.w81 { width: 81px; } .w39 { width: 39px; } .w58 { width: 58px; } .w13 { width: 13px; } .w22 { width: 22px; }
.trade { width: 40px; margin-right: 2px; }
.buy { background: #f3cfca; }
.sell { background: #c4dcf2; }

.chart { flex: 1; display: grid; grid-template-columns: 42px 1fr 47px; min-height: 600px; margin: 0 3px; padding: 0 4px 0 3px; background: #e0e0e0; }
.chart > * { border-top: 1px solid #909090; }
.axis { position: relative; overflow: hidden; background: #fff; color: #444; font-size: 11px; }
.left { border-left: 1px solid #909090; }
.right { border-right: 1px solid #909090; border-left: 1px solid #909090; }
.ticks { position: absolute; inset: 0; width: 100%; height: 100%; stroke: #909090; }
.axis span, .now, .cursor, .shut, .gridbtn { position: absolute; transform: translateY(-50%); white-space: nowrap; }
.left span { right: 2px; }
.left .low { right: 5px; }
.gridbtn { left: 5px; width: 14px; height: 14px; border: 1px solid #000; background: #ddd; }
.gridbtn svg { width: 12px; height: 12px; }
.right .from { left: 0; }
.right .lc { color: #e81b0c; }
.right .hc { color: #1060cc; }
.right .mid { left: 7px; }
.right .vol { right: 0; }
.now { right: 4px; width: 34px; height: 13px; background: #e81b0c; color: #fff; font-weight: normal; line-height: 13px; text-align: center; }
.axis .rate { right: 5px; color: #e81b0c; }
.right .now { width: 40px; right: 1px; }
.cursor { left: 1px; width: 38px; height: 29px; border: 1px solid #000; background: #ffdb70; line-height: 13px; text-align: center; overflow: hidden; }
.right .cursor { left: 3px; width: 42px; }
.cursor em { display: block; color: #ff0000; font-style: normal; }
.shut { right: 3px; width: 8px; height: 8px; background: #444; color: #fff; line-height: 8px; }

.plot { position: relative; min-width: 0; border-left: 1px solid #909090; }
.canvas { position: absolute; inset: 0; width: 100%; height: 100%; stroke: none; shape-rendering: crispEdges; }
.fleck { stroke: #fff; stroke-dasharray: 3 2; }
.caption { position: absolute; left: 3px; top: 1px; display: flex; align-items: center; gap: 2px; }
.caption i { width: 5px; height: 5px; border: 1px solid #808080; background: #bbb; }
.caption span { padding: 0 3px; border: 1px solid #c0c0c0; background: #f0f0f0; color: #333; line-height: 13px; }
.note { position: absolute; transform: translateY(-50%); white-space: nowrap; }
.end { right: 4px; }

.timeline { display: flex; height: 19px; margin: 0 7px 0 6px; border: 1px solid #909090; border-width: 1px 0 1px 1px; background: #fff; color: #444; }
.scale { position: relative; flex: 1; margin-left: 41px; border-left: 1px solid #909090; }
.scale span { position: absolute; top: 0; height: 17px; padding-left: 2px; border-left: 1px solid #909090; line-height: 16px; }
.scale b { padding-left: 1px; line-height: 16px; }
.scale mark { position: absolute; right: -12px; top: -1px; width: 136px; height: 18px; border: 1px solid #000; background: #ffdb70; color: #444; line-height: 16px; text-align: center; white-space: nowrap; }
.last { width: 47px; padding-left: 14px; line-height: 16px; white-space: nowrap; }

.foot { display: flex; height: 20px; margin: 0 3px; padding: 0 4px 3px 3px; background: #e4e4e4; }
.key { width: 17px; height: 17px; border: 1px solid; border-color: #fff #707070 #707070 #fff; background: #ececec; }
.key svg { width: 14px; height: 14px; fill: #000; stroke: none; }
.track { flex: 1; display: flex; justify-content: flex-end; height: 17px; background: #f4f4f4; }
.thumb { width: 62%; border: 1px solid; border-color: #fff #707070 #707070 #aaa; background: #efefef; }
.speed { width: 70px; margin: 0 6px; }
.speed input { display: block; appearance: none; width: 70px; height: 11px; background: linear-gradient(#808080, #808080) 0 5px / 100% 1px no-repeat; }
.speed input::-webkit-slider-thumb { appearance: none; width: 4px; height: 11px; border: 1px solid #888; background: #eee; }
.speed svg { width: 70px; height: 4px; margin-top: 2px; stroke: #000; }
.tools { display: flex; justify-content: space-between; width: 221px; }
.tools button { width: 17px; height: 17px; color: #555; font: bold 17px/17px "Liberation Sans", sans-serif; }
.tools .lit { background: #fff; }
.tools svg { width: 15px; height: 15px; }
</style>
